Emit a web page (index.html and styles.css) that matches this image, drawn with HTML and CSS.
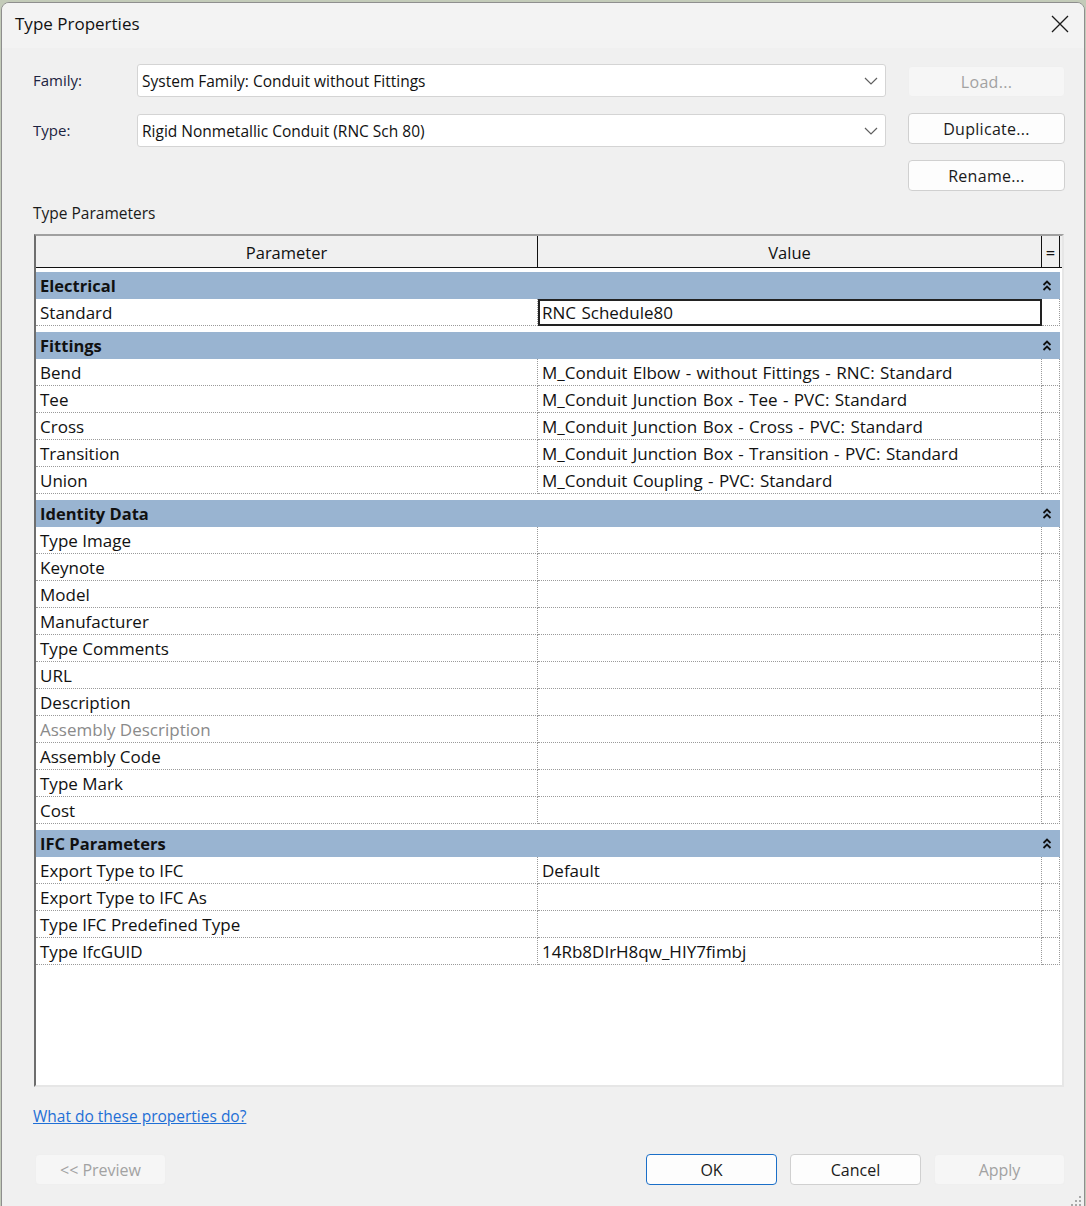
FILE: index.html
```html
<!DOCTYPE html>
<html>
<head>
<meta charset="utf-8">
<title>Type Properties</title>
<link rel="stylesheet" href="styles.css">
</head>
<body>
<div class="window">
  <div class="titlebar">
    <span class="title">Type Properties</span>
    <span class="close"><svg width="18" height="18" viewBox="0 0 18 18"><path d="M1 1 L17 17 M17 1 L1 17" stroke="#1a1a1a" stroke-width="1.3" fill="none"/></svg></span>
  </div>
  <div class="content">
    <div class="form-row row1">
      <label class="lbl">Family:</label>
      <div class="select"><span>System Family: Conduit without Fittings</span><svg class="chev" width="14" height="8" viewBox="0 0 14 8"><path d="M1 1 L7 7 L13 1" stroke="#606060" stroke-width="1.2" fill="none"/></svg></div>
      <button class="btn disabled load">Load...</button>
    </div>
    <div class="form-row row2">
      <label class="lbl">Type:</label>
      <div class="select"><span>Rigid Nonmetallic Conduit (RNC Sch 80)</span><svg class="chev" width="14" height="8" viewBox="0 0 14 8"><path d="M1 1 L7 7 L13 1" stroke="#606060" stroke-width="1.2" fill="none"/></svg></div>
      <button class="btn dup">Duplicate...</button>
    </div>
    <div class="form-row row3">
      <button class="btn rename">Rename...</button>
    </div>
    <div class="section-label">Type Parameters</div>
    <div class="grid">
      <div class="grid-head">
        <div class="hc c-param">Parameter</div>
        <div class="hc c-value">Value</div>
        <div class="hc c-extra">=</div>
      </div>

      <div class="group">
        <div class="group-head"><span>Electrical</span><svg class="collapse" width="10" height="13" viewBox="0 0 10 13"><path d="M1.5 6 L5 2.5 L8.5 6 M1.5 11 L5 7.5 L8.5 11" stroke="#111" stroke-width="1.8" fill="none"/></svg></div>
        <div class="row"><div class="cell c-param">Standard</div><div class="cell c-value editing">RNC Schedule80</div><div class="cell c-extra"></div></div>
      </div>

      <div class="group">
        <div class="group-head"><span>Fittings</span><svg class="collapse" width="10" height="13" viewBox="0 0 10 13"><path d="M1.5 6 L5 2.5 L8.5 6 M1.5 11 L5 7.5 L8.5 11" stroke="#111" stroke-width="1.8" fill="none"/></svg></div>
        <div class="row"><div class="cell c-param">Bend</div><div class="cell c-value">M_Conduit Elbow - without Fittings - RNC: Standard</div><div class="cell c-extra"></div></div>
        <div class="row"><div class="cell c-param">Tee</div><div class="cell c-value">M_Conduit Junction Box - Tee - PVC: Standard</div><div class="cell c-extra"></div></div>
        <div class="row"><div class="cell c-param">Cross</div><div class="cell c-value">M_Conduit Junction Box - Cross - PVC: Standard</div><div class="cell c-extra"></div></div>
        <div class="row"><div class="cell c-param">Transition</div><div class="cell c-value">M_Conduit Junction Box - Transition - PVC: Standard</div><div class="cell c-extra"></div></div>
        <div class="row"><div class="cell c-param">Union</div><div class="cell c-value">M_Conduit Coupling - PVC: Standard</div><div class="cell c-extra"></div></div>
      </div>

      <div class="group">
        <div class="group-head"><span>Identity Data</span><svg class="collapse" width="10" height="13" viewBox="0 0 10 13"><path d="M1.5 6 L5 2.5 L8.5 6 M1.5 11 L5 7.5 L8.5 11" stroke="#111" stroke-width="1.8" fill="none"/></svg></div>
        <div class="row"><div class="cell c-param">Type Image</div><div class="cell c-value"></div><div class="cell c-extra"></div></div>
        <div class="row"><div class="cell c-param">Keynote</div><div class="cell c-value"></div><div class="cell c-extra"></div></div>
        <div class="row"><div class="cell c-param">Model</div><div class="cell c-value"></div><div class="cell c-extra"></div></div>
        <div class="row"><div class="cell c-param">Manufacturer</div><div class="cell c-value"></div><div class="cell c-extra"></div></div>
        <div class="row"><div class="cell c-param">Type Comments</div><div class="cell c-value"></div><div class="cell c-extra"></div></div>
        <div class="row"><div class="cell c-param">URL</div><div class="cell c-value"></div><div class="cell c-extra"></div></div>
        <div class="row"><div class="cell c-param">Description</div><div class="cell c-value"></div><div class="cell c-extra"></div></div>
        <div class="row"><div class="cell c-param muted">Assembly Description</div><div class="cell c-value"></div><div class="cell c-extra"></div></div>
        <div class="row"><div class="cell c-param">Assembly Code</div><div class="cell c-value"></div><div class="cell c-extra"></div></div>
        <div class="row"><div class="cell c-param">Type Mark</div><div class="cell c-value"></div><div class="cell c-extra"></div></div>
        <div class="row"><div class="cell c-param">Cost</div><div class="cell c-value"></div><div class="cell c-extra"></div></div>
      </div>

      <div class="group">
        <div class="group-head"><span>IFC Parameters</span><svg class="collapse" width="10" height="13" viewBox="0 0 10 13"><path d="M1.5 6 L5 2.5 L8.5 6 M1.5 11 L5 7.5 L8.5 11" stroke="#111" stroke-width="1.8" fill="none"/></svg></div>
        <div class="row"><div class="cell c-param">Export Type to IFC</div><div class="cell c-value">Default</div><div class="cell c-extra"></div></div>
        <div class="row"><div class="cell c-param">Export Type to IFC As</div><div class="cell c-value"></div><div class="cell c-extra"></div></div>
        <div class="row"><div class="cell c-param">Type IFC Predefined Type</div><div class="cell c-value"></div><div class="cell c-extra"></div></div>
        <div class="row"><div class="cell c-param">Type IfcGUID</div><div class="cell c-value">14Rb8DIrH8qw_HIY7fimbj</div><div class="cell c-extra"></div></div>
      </div>
    </div>
    <a class="help" href="#">What do these properties do?</a>
    <div class="footer">
      <button class="btn disabled preview">&lt;&lt; Preview</button>
      <div class="spacer"></div>
      <button class="btn ok">OK</button>
      <button class="btn">Cancel</button>
      <button class="btn disabled">Apply</button>
    </div>
  </div>
  <svg class="grip" width="12" height="12" viewBox="0 0 12 12">
    <rect x="9" y="1" width="2" height="2" fill="#a8a8a8"/>
    <rect x="5" y="5" width="2" height="2" fill="#a8a8a8"/>
    <rect x="9" y="5" width="2" height="2" fill="#a8a8a8"/>
    <rect x="1" y="9" width="2" height="2" fill="#a8a8a8"/>
    <rect x="5" y="9" width="2" height="2" fill="#a8a8a8"/>
    <rect x="9" y="9" width="2" height="2" fill="#a8a8a8"/>
  </svg>
</div>
</body>
</html>
```

FILE: styles.css
```css
* { box-sizing: border-box; }
html, body { margin: 0; padding: 0; }
body {
  background: #c3cbb9;
  font-family: "Open Sans", "Noto Sans", sans-serif;
  color: #1a1a1a;
  overflow: hidden;
  height: 1206px;
}
.window {
  position: relative;
  margin: 2px 0 0 1px;
  width: 1084px;
  height: 1220px;
  background: #f0f0f0;
  border: 1px solid #8e8e8e;
  border-radius: 8px;
  overflow: hidden;
}
.titlebar {
  height: 45px;
  background: #f3f3f3;
  display: flex;
  align-items: center;
  justify-content: space-between;
  padding: 0 15px 4px 13px;
}
.title { font-size: 17px; color: #111; }
.close { display: flex; margin-top: 0; }
.content { padding: 0 19px 0 31px; }
.form-row { display: flex; align-items: flex-start; }
.row1 { margin-top: 16px; }
.row2 { margin-top: 17px; }
.row3 { margin-top: 13px; justify-content: flex-end; }
.lbl {
  width: 104px;
  height: 33px;
  line-height: 33px;
  font-size: 15px;
  color: #1c2340;
}
.select {
  width: 749px;
  height: 33px;
  background: #fff;
  border: 1px solid #d4d4d4;
  border-radius: 3px;
  display: flex;
  align-items: center;
  justify-content: space-between;
  padding: 0 7px 0 4px;
  font-size: 15.5px;
  color: #111;
}
.btn {
  width: 157px;
  height: 31px;
  font-family: "Open Sans", "Noto Sans", sans-serif;
  font-size: 16px;
  color: #1a1a1a;
  background: #fdfdfd;
  border: 1px solid #d0d0d0;
  border-radius: 4px;
  padding: 0;
}
.dup, .rename, .load { letter-spacing: 0.3px; }
.btn.disabled {
  background: #f6f6f6;
  border-color: #efefef;
  color: #a2a2a2;
}
.load { margin-left: auto; margin-top: 2px; }
.dup { margin-left: auto; margin-top: -1px; }
.section-label {
  margin-top: 12px;
  height: 20px;
  line-height: 20px;
  font-size: 15.5px;
  color: #1a1a1a;
}
.grid {
  margin-top: 11px;
  margin-left: 1px;
  width: 1030px;
  height: 853px;
  background: #fff;
  border-style: solid;
  border-width: 2px;
  border-color: #a0a0a0 #e6e6e6 #e6e6e6 #6e6e6e;
}
.grid-head {
  display: flex;
  height: 32px;
  background: #f0f0f0;
  border-bottom: 1px solid #111;
}
.hc {
  display: flex;
  align-items: center;
  justify-content: center;
  font-size: 16.5px;
  color: #111;
  border-right: 1px solid #111;
  padding-top: 1px;
}
.c-param { width: 502px; flex: none; }
.c-value { width: 504px; flex: none; }
.c-extra { width: 18px; flex: none; }
.group { margin-top: 6px; }
.grid-head + .group { margin-top: 4px; }
.group-head {
  width: 1024px;
  height: 27px;
  background: #99b4d1;
  display: flex;
  align-items: center;
  justify-content: space-between;
  padding: 0 8px 0 4px;
  font-size: 16.5px;
  font-weight: 700;
  color: #111;
}
.row { display: flex; height: 27px; }
.cell {
  height: 27px;
  border-bottom: 1px dotted #9a9a9a;
  border-right: 1px dotted #9a9a9a;
  padding-left: 4px;
  font-size: 17px;
  line-height: 27px;
  color: #111;
  white-space: nowrap;
  overflow: hidden;
}
.c-value.cell { word-spacing: 1px; }
.cell.editing {
  border: 2px solid #222;
  padding-left: 2px;
  line-height: 23px;
}
.muted { color: #8a8a8a; }
.help {
  display: inline-block;
  margin-top: 19px;
  height: 20px;
  line-height: 20px;
  font-size: 15.5px;
  color: #1f6fd6;
  text-decoration: underline;
}
.footer {
  display: flex;
  margin-top: 27px;
  gap: 13px;
  padding-left: 2px;
}
.footer .btn { width: 131px; }
.spacer { flex: 1; }
.btn.ok { border-color: #1b6fc8; }
.grip { position: absolute; right: 2px; bottom: 14px; }
```
